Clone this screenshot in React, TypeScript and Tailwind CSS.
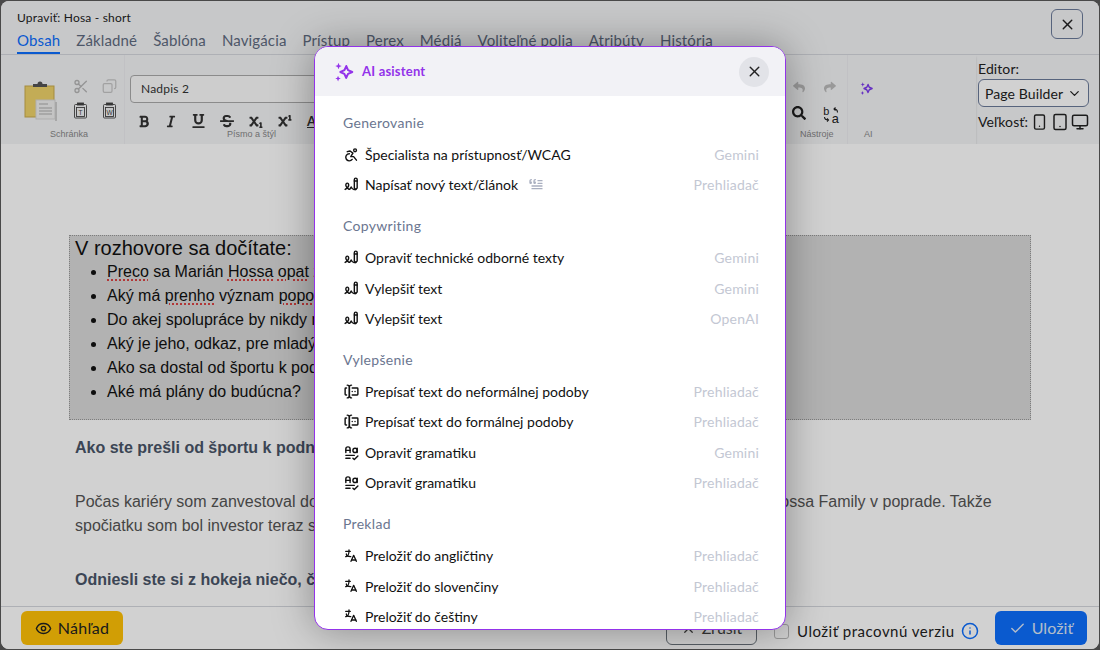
import { Check, ChevronDown, Copy, Eye, Info, Monitor, Scissors, Smartphone, Tablet, X } from 'lucide-react';
import { FaBold, FaItalic, FaReply, FaSearch, FaShare, FaStrikethrough, FaSubscript, FaSuperscript, FaUnderline } from 'react-icons/fa';
import { TbBlockquote, TbDisabled2, TbForms, TbLanguage, TbTextGrammar, TbWritingSign } from 'react-icons/tb';
import type { ReactNode } from 'react';

const uiFont = "font-['Lato','Noto_Sans',sans-serif]";

function Sparkle({ className }: { className?: string }) {
  return (
    <svg viewBox="0 0 24 24" className={className} fill="none">
      <path d="M14.500 5.500 16.400 10 21 12l-4.600 2-2 4.500-2-4.500L8 12l4.500-2z" stroke="currentColor" strokeWidth="2.200" strokeLinejoin="round" />
      <path d="M6 2l1 2.600L9.500 5.500 7 6.500 6 9 5 6.500 2.500 5.500 5 4.600zM5.500 16l.9 2.300 2.100.8-2.100.9-.9 2.300-.9-2.300-2.100-.9 2.100-.8z" fill="currentColor" />
    </svg>
  );
}

function PasteIcon({ letter }: { letter: string }) {
  return (
    <svg viewBox="0 0 15 17" className="w-[15px] h-[17px] text-[#444]" fill="none" stroke="currentColor" strokeWidth="0.900">
      <path d="M4.500 2.500H2.500a1 1 0 0 0-1 1V15a1 1 0 0 0 1 1h10a1 1 0 0 0 1-1V3.500a1 1 0 0 0-1-1h-2" />
      <rect x="4.500" y="1" width="6" height="2" fill="currentColor" />
      <rect x="3.500" y="5.500" width="8" height="9" />
      <text x="7.500" y="12.800" fontSize="6.500" textAnchor="middle" fill="currentColor" stroke="none" fontFamily="Liberation Sans">{letter}</text>
    </svg>
  );
}

function ClipboardIcon() {
  return (
    <svg viewBox="0 0 34 42" className="w-[34px] h-[42px]">
      <rect x="1" y="7" width="29" height="31" fill="#eed26a" stroke="#c9ab4c" />
      <path d="M9 8V5h4.500a2.500 2.500 0 0 1 5 0H23v3z" fill="#555" />
      <rect x="12" y="21" width="19" height="19" fill="#f0f0f0" stroke="#d5d5d5" />
      <rect x="31" y="23" width="2" height="19" fill="#ccc" />
      <path d="M15 25h9M15 29h13M15 32h13M15 35h13" stroke="#aaa" strokeWidth="1.200" />
    </svg>
  );
}

function ReplaceIcon() {
  return (
    <svg viewBox="0 0 17 18" className="w-[17px] h-[18px] text-[#222]" fill="none" stroke="currentColor" strokeWidth="1.100">
      <text x="0" y="9" fontSize="11" fontFamily="Liberation Mono" fill="currentColor" stroke="none">b</text>
      <text x="8.500" y="17" fontSize="13" fontFamily="Liberation Mono" fill="currentColor" stroke="none">a</text>
      <path d="M14.500 6.500c0-2.500-1-3.500-3.500-3.500M12.500 1.500 11 3l1.500 1.500M1.500 11c0 2 1 3 4 3M4 12.500 5.500 14 4 15.500" />
    </svg>
  );
}

function TopTabs() {
  const tabs = ['Základné', 'Šablóna', 'Navigácia', 'Prístup', 'Perex', 'Médiá', 'Voliteľné polia', 'Atribúty', 'História'];
  return (
    <div className="flex gap-[16px] mt-[3px] text-[15px] tracking-[0.14px] h-[26px]">
      <span className="text-[#0d6efd] border-b-2 border-[#0d6efd] h-[25px]">Obsah</span>
      {tabs.map((t) => (
        <span key={t} className="text-[#5f6b7f]">{t}</span>
      ))}
    </div>
  );
}

function Ribbon() {
  return (
    <div className="flex h-[90px] border-t border-[#d5d7dd] bg-[#f3f4f6]">
      <div className="flex w-[975px] shadow-[0_2px_2px_rgba(0,0,0,0.15)]">
        {/* Schránka */}
        <div className="w-[124px] shrink-0 pl-[23px] pt-[24px] relative border-r border-[#ececef]">
          <div className="flex">
            <ClipboardIcon />
            <div className="ml-[15px] -mt-[1px] grid grid-cols-2 gap-x-[13px] gap-y-[7px] h-fit">
              <Scissors className="w-[16px] h-[17px] text-[#b5b5b5]" />
              <Copy className="w-[15px] h-[16px] text-[#c5c5c5] -scale-x-100" />
              <PasteIcon letter="T" />
              <PasteIcon letter="W" />
            </div>
          </div>
          <div className="absolute bottom-[3px] left-[49px] text-[9px] text-[#888] font-['Liberation_Sans',sans-serif]">Schránka</div>
        </div>
        {/* Písmo a štýl */}
        <div className="w-[658px] shrink-0 pl-[5px] pt-[20px] relative">
          <div className="w-[190px] h-[28px] border border-[#aaa] rounded-[4px] bg-[#fafafa] flex items-center pl-[10px] text-[12px] text-[#333] tracking-[0.2px]">Nadpis 2</div>
          <div className="flex items-center gap-[15px] pl-[8px] mt-[11px] text-[#333]">
            <FaBold className="w-[12px] h-[13px]" />
            <FaItalic className="w-[12px] h-[13px]" />
            <FaUnderline className="w-[13px] h-[14px]" />
            <FaStrikethrough className="w-[14px] h-[14px]" />
            <FaSubscript className="w-[14px] h-[13px]" />
            <FaSuperscript className="w-[14px] h-[13px]" />
            <span className="text-[13px] font-bold underline leading-none">A</span>
          </div>
          <div className="absolute bottom-[3px] left-[102px] text-[9px] text-[#888] font-['Liberation_Sans',sans-serif]">Písmo a štýl</div>
        </div>
        {/* Nástroje */}
        <div className="w-[65px] shrink-0 relative pt-[26px] pl-[9px] border-r border-[#ececef]">
          <div className="grid grid-cols-2 gap-x-[14px] gap-y-[13px] w-fit">
            <FaReply className="w-[14px] h-[12px] text-[#bbb]" />
            <FaShare className="w-[14px] h-[12px] text-[#bbb]" />
            <FaSearch className="w-[14px] h-[14px] text-[#222]" />
            <ReplaceIcon />
          </div>
          <div className="absolute bottom-[3px] left-[17px] text-[9px] text-[#888] font-['Liberation_Sans',sans-serif]">Nástroje</div>
        </div>
        {/* AI */}
        <div className="flex-1 relative pt-[26px] pl-[11px]">
          <Sparkle className="w-[15px] h-[15px] text-[#7c3aed]" />
          <div className="absolute bottom-[3px] left-[16px] text-[9px] text-[#888] font-['Liberation_Sans',sans-serif]">AI</div>
        </div>
      </div>
      {/* Editor */}
      <div className="pl-[2px] pt-[5px] text-[14px] text-[#222] tracking-[0.1px]">
        <div className="leading-[18px]">Editor:</div>
        <div className="mt-[1px] w-[111px] h-[28px] border border-[#6b7a99] rounded-[6px] bg-white flex items-center justify-between pl-[6px] pr-[6px]">
          <span>Page Builder</span>
          <ChevronDown className="w-[15px] h-[15px]" />
        </div>
        <div className="mt-[4px] flex items-center">
          <span>Veľkosť:</span>
          <Smartphone className="w-[17px] h-[18px] ml-[3px]" />
          <Tablet className="w-[18px] h-[18px] ml-[3px]" />
          <Monitor className="w-[18px] h-[18px] ml-[2px]" />
        </div>
      </div>
    </div>
  );
}

function EditorContent() {
  const spell = 'underline decoration-dotted decoration-[#d92020] underline-offset-[3px]';
  return (
    <div className="flex-1 overflow-hidden bg-white px-[68px] pt-[91px] font-['Liberation_Sans',sans-serif]">
      <div className="h-[185px] bg-[#d9d9d9] border border-dotted border-[#999] pl-[5px] pt-[1px] text-[#111]">
        <div className="text-[20px] leading-[23px]">V rozhovore sa dočítate:</div>
        <ul className="list-disc pl-[32px] text-[16px] leading-[24px]">
          <li><span className={spell}>Preco</span> sa Marián <span className={spell}>Hossa</span> <span className={spell}>opat</span> začal venovať podnikaniu?</li>
          <li>Aký má <span className={spell}>prenho</span> význam <span className={spell}>popo</span>pradská značka?</li>
          <li>Do akej spolupráce by nikdy nešiel?</li>
          <li>Aký je jeho, odkaz, pre mladých?</li>
          <li>Ako sa dostal od športu k podnikaniu?</li>
          <li>Aké má plány do budúcna?</li>
        </ul>
      </div>
      <div className="pl-[6px] text-[16px] leading-[24px]">
        <p className="mt-[16px] font-bold text-[#4a5568]">Ako ste prešli od športu k podnikaniu?</p>
        <p className="mt-[30px] text-[#555] whitespace-nowrap">Počas kariéry som zanvestoval do viacerých firiem a potom aj do rodinného podniku pána Marián Hossa Family v poprade. Takže</p>
        <p className="text-[#555] whitespace-nowrap">spočiatku som bol investor teraz som už podnikateľ.</p>
        <p className="mt-[30px] font-bold text-[#4a5568] whitespace-nowrap">Odniesli ste si z hokeja niečo, čo vám pomáha?</p>
      </div>
    </div>
  );
}

function Footer() {
  return (
    <div className="h-[43px] shrink-0 border-t border-[#d5d7dd] bg-white flex items-start pt-[4px] pl-[20px] pr-[12px] relative">
      <button className="w-[102px] h-[34px] rounded-[6px] bg-[#ffc107] flex items-center justify-center gap-[6px] text-[16px] text-[#222] tracking-[0.3px]">
        <Eye className="w-[17px] h-[17px]" />
        Náhľad
      </button>
      <button className="ml-[543px] w-[91px] h-[34px] rounded-[6px] border border-[#6c757d] flex items-center justify-center gap-[6px] text-[16px] text-[#444]">
        <X className="w-[15px] h-[15px]" />
        Zrušiť
      </button>
      <div className="ml-[17px] mt-[3px] h-[34px] flex items-center">
        <span className="w-[15px] h-[15px] rounded-[3px] border border-[#bbb] bg-white" />
        <span className="ml-[8px] text-[15px] text-[#222] tracking-[0.5px]">Uložiť pracovnú verziu</span>
        <Info className="w-[18px] h-[18px] ml-[6px] text-[#0d6efd]" />
      </div>
      <button className="ml-auto w-[92px] h-[34px] rounded-[6px] bg-[#0d6efd] flex items-center justify-center gap-[6px] text-[16px] text-[#dbe6f7] tracking-[0.1px]">
        <Check className="w-[17px] h-[17px]" />
        Uložiť
      </button>
    </div>
  );
}

type Item = { icon: ReactNode; label: string; source: string; extra?: boolean };

function Section({ title, items }: { title: string; items: Item[] }) {
  return (
    <div className="mb-[9px]">
      <div className="h-[34px] flex items-center text-[14px] text-[#6b7690] tracking-[0.3px]">{title}</div>
      {items.map((item, i) => (
        <div key={i} className="h-[30.300px] flex items-center text-[14px] text-[#111]">
          <span className="w-[22px] shrink-0 text-[#111]">{item.icon}</span>
          <span>{item.label}</span>
          {item.extra && <TbBlockquote className="ml-[10px] w-[16px] h-[16px] text-[#a9afc0]" />}
          <span className="ml-auto text-[#c3c7d3] tracking-[0.2px]">{item.source}</span>
        </div>
      ))}
    </div>
  );
}

function AiModal() {
  const pen = <TbWritingSign className="w-[17px] h-[17px]" />;
  const forms = <TbForms className="w-[17px] h-[17px]" />;
  const spell = <TbTextGrammar className="w-[17px] h-[17px]" />;
  const tr = <TbLanguage className="w-[16px] h-[16px]" />;
  return (
    <div className="w-[472px] h-[584px] bg-white border border-[#9333ea] rounded-[14px] overflow-hidden shadow-[0_0_40px_rgba(0,0,0,0.35)] flex flex-col">
      <div className="h-[49px] shrink-0 bg-[#f2f2f6] flex items-center pl-[18px] pr-[16px]">
        <Sparkle className="w-[22px] h-[22px] text-[#9333ea]" />
        <span className="ml-[7px] text-[13px] font-bold text-[#9333ea] tracking-[0.2px]">AI asistent</span>
        <button className="ml-auto w-[30px] h-[30px] rounded-full bg-[#e2e3e8] flex items-center justify-center text-[#222]">
          <X className="w-[17px] h-[17px]" />
        </button>
      </div>
      <div className="flex-1 overflow-hidden pl-[28px] pr-[26px] pt-[9px]">
        <Section title="Generovanie" items={[
          { icon: <TbDisabled2 className="w-[17px] h-[17px]" />, label: 'Špecialista na prístupnosť/WCAG', source: 'Gemini' },
          { icon: pen, label: 'Napísať nový text/článok', source: 'Prehliadač', extra: true },
        ]} />
        <Section title="Copywriting" items={[
          { icon: pen, label: 'Opraviť technické odborné texty', source: 'Gemini' },
          { icon: pen, label: 'Vylepšiť text', source: 'Gemini' },
          { icon: pen, label: 'Vylepšiť text', source: 'OpenAI' },
        ]} />
        <Section title="Vylepšenie" items={[
          { icon: forms, label: 'Prepísať text do neformálnej podoby', source: 'Prehliadač' },
          { icon: forms, label: 'Prepísať text do formálnej podoby', source: 'Prehliadač' },
          { icon: spell, label: 'Opraviť gramatiku', source: 'Gemini' },
          { icon: spell, label: 'Opraviť gramatiku', source: 'Prehliadač' },
        ]} />
        <Section title="Preklad" items={[
          { icon: tr, label: 'Preložiť do angličtiny', source: 'Prehliadač' },
          { icon: tr, label: 'Preložiť do slovenčiny', source: 'Prehliadač' },
          { icon: tr, label: 'Preložiť do češtiny', source: 'Prehliadač' },
        ]} />
      </div>
    </div>
  );
}

export default function App() {
  return (
    <div className={`relative w-[1100px] h-[650px] overflow-hidden bg-[#5a5a5a] p-px ${uiFont}`}>
      <div className="h-full rounded-[8px] overflow-hidden bg-white flex flex-col">
        <div className="h-[53px] shrink-0 bg-[#f3f4f6] px-[16px] pt-[8px] relative">
          <div className="text-[12px] leading-[17px] text-[#222] tracking-[0.2px]">Upraviť: Hosa - short</div>
          <TopTabs />
          <button className="absolute right-[16px] top-[8px] w-[32px] h-[30px] rounded-[6px] border border-[#6b7a99] flex items-center justify-center text-[#222]">
            <X className="w-[17px] h-[17px]" />
          </button>
        </div>
        <Ribbon />
        <EditorContent />
        <Footer />
      </div>
      {/* Modal overlay */}
      <div className="absolute inset-0 bg-black/18 flex justify-center pt-[46px]">
        <AiModal />
      </div>
    </div>
  );
}
